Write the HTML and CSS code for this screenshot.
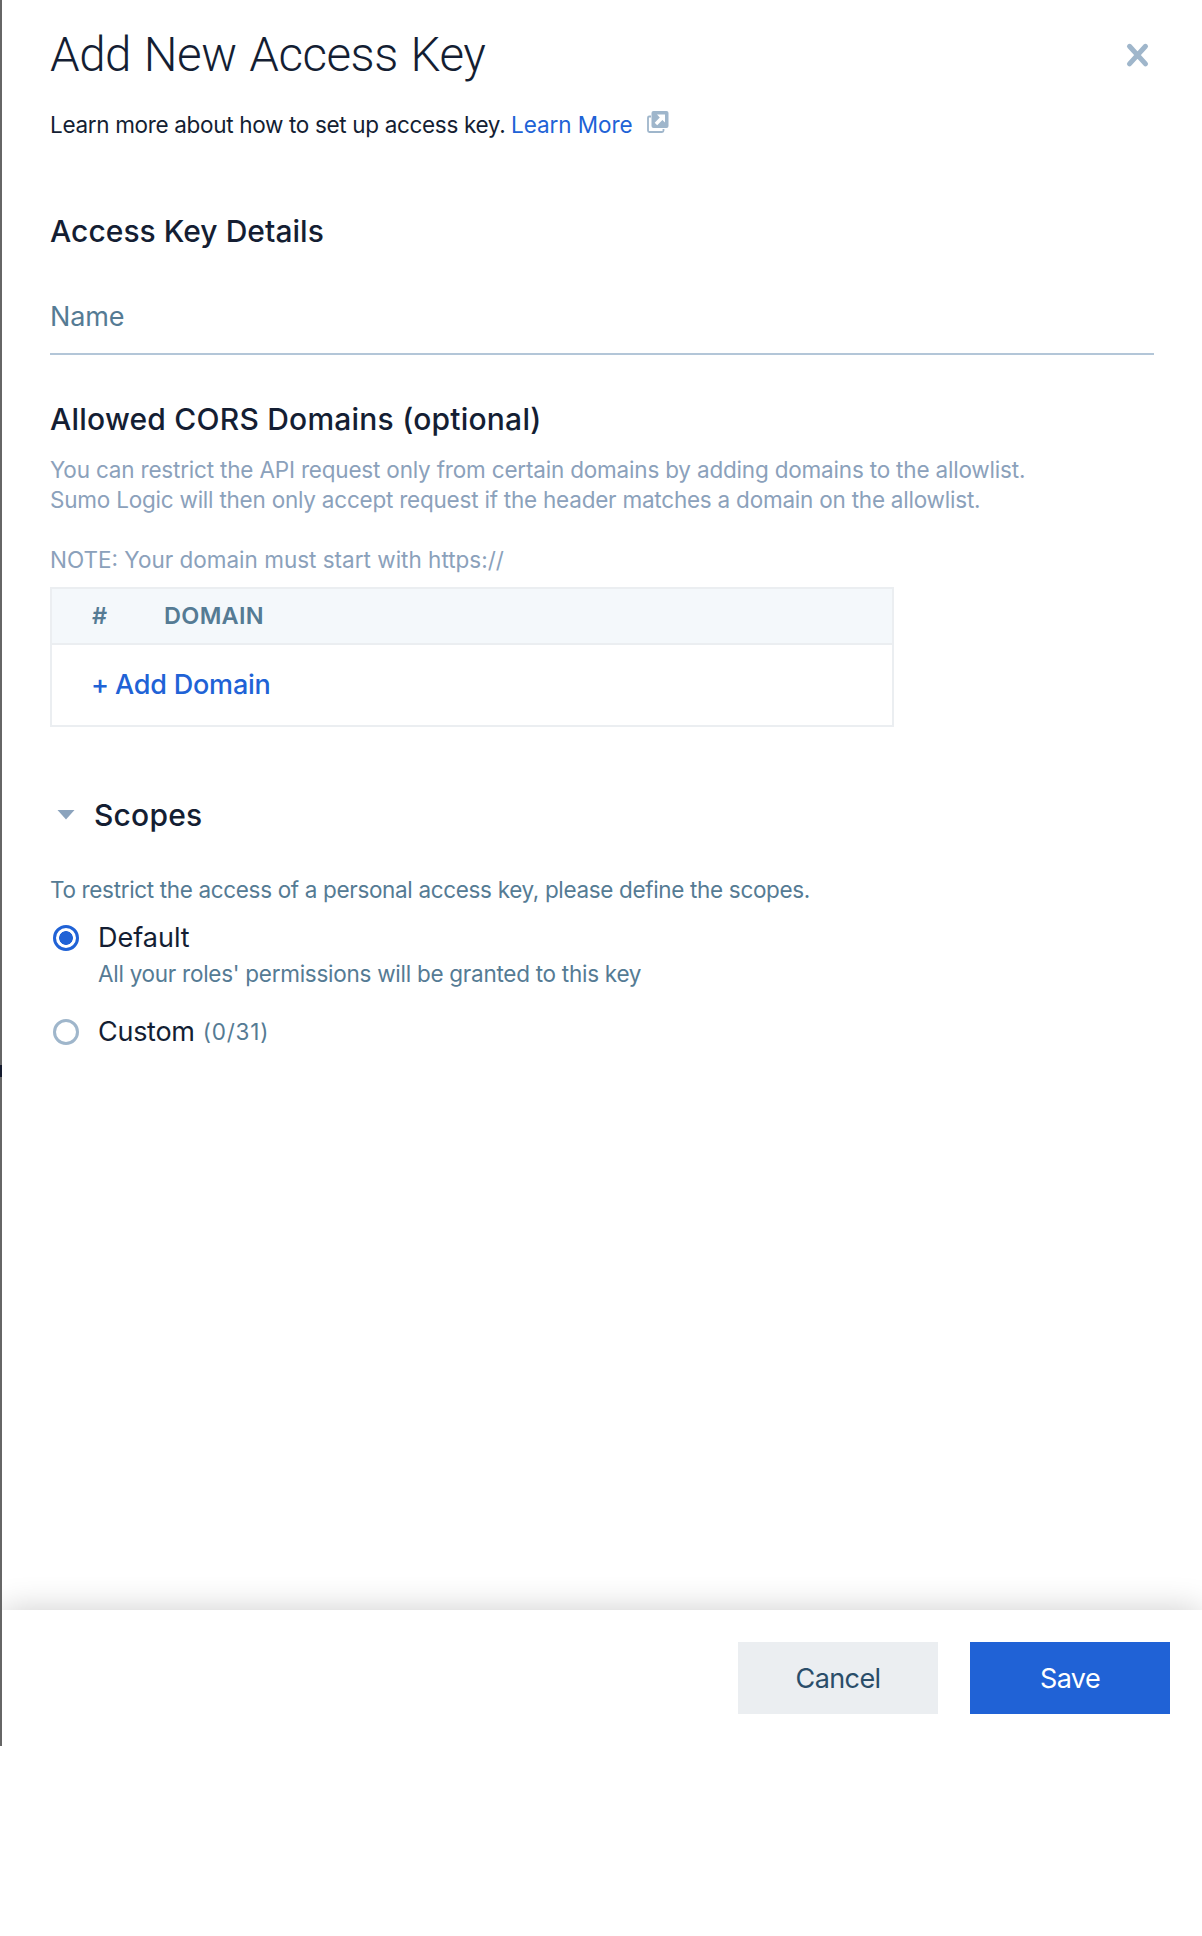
FILE: index.html
```html
<!DOCTYPE html>
<html lang="en">
<head>
<meta charset="utf-8">
<title>Add New Access Key</title>
<link rel="stylesheet" href="styles.css">
</head>
<body>
<div class="screen">
  <div class="backdrop"></div>
  <main class="panel">
    <div class="content">
      <header class="panel-header">
        <h1>Add New Access Key</h1>
        <button class="close" aria-label="Close">
          <svg width="26" height="28" viewBox="0 0 26 28"><path d="M4.5 5.3 20.5 22.9M20.5 5.3 4.5 22.9" stroke="#9fb6cb" stroke-width="5" stroke-linecap="round" fill="none"/></svg>
        </button>
      </header>
      <p class="intro"><span class="intro-text">Learn more about how to set up access key.</span><a class="link">Learn More</a><svg class="external" width="22" height="22" viewBox="0 0 22 22"><path d="M4 5.5H2.2Q1 5.5 1 6.700V19.600Q1 21 2.400 21H15Q16.500 21 16.500 19.500V18" fill="none" stroke="#9fb6cb" stroke-width="1.800"/><rect x="4.500" y="0" width="17" height="17" rx="2" fill="#9fb6cb"/><path d="M10 3.500H18V11.500L15.400 8.900 10.200 14.200 7.700 11.700 12.800 6.400Z" fill="#fff"/></svg></p>

      <h2 class="details-title">Access Key Details</h2>
      <div class="field">Name</div>

      <h2 class="cors-title">Allowed CORS Domains (optional)</h2>
      <p class="hint"><span class="hint-line">You can restrict the API request only from certain domains by adding domains to the allowlist.</span><br><span class="hint-line second">Sumo Logic will then only accept request if the header matches a domain on the allowlist.</span></p>
      <p class="hint note">NOTE: Your domain must start with https://</p>
      <div class="domains">
        <div class="domains-head"><span class="col-num">#</span><span>DOMAIN</span></div>
        <div class="domains-add"><span class="plus">+</span><span>Add Domain</span></div>
      </div>

      <div class="scopes-title">
        <svg width="18" height="10" viewBox="0 0 18 10"><path d="M.5 0H17.500L9 9.500Z" fill="#8ba3bd"/></svg>
        <h2>Scopes</h2>
      </div>
      <p class="scopes-hint">To restrict the access of a personal access key, please define the scopes.</p>
      <div class="option">
        <span class="radio selected"></span><span class="option-label">Default</span>
      </div>
      <p class="option-hint">All your roles' permissions will be granted to this key</p>
      <div class="option custom">
        <span class="radio"></span><span class="option-label">Custom</span><span class="count">(0/31)</span>
      </div>
    </div>
    <footer class="footer">
      <button class="btn cancel">Cancel</button>
      <button class="btn save">Save</button>
    </footer>
  </main>
</div>
</body>
</html>
```
FILE: styles.css
```css
* { box-sizing: border-box; }
body { margin: 0; background: #fff; color: #141e33; font-family: Inter, "Liberation Sans", sans-serif; }
h1, h2, p { margin: 0; }
button { border: 0; padding: 0; background: none; font-family: inherit; }
svg { display: block; flex: none; }

.screen { display: flex; height: 1746px; }
.backdrop {
  width: 2px;
  background: linear-gradient(#666 0 1065px, #141a2e 1065px 1077px, #666 1077px);
}
.panel { flex: 1; display: flex; flex-direction: column; overflow: hidden; background: #fff; }
.content { flex: 1; padding: 25px 48px 0; }

.panel-header { display: flex; justify-content: space-between; }
h1 { font: 300 47.5px/60px Roboto, sans-serif; letter-spacing: -0.5px; word-spacing: 1.8px; }
.close { width: 26px; height: 28px; margin: 16px 3px 0 0; }

.intro { display: flex; margin-top: 25px; font-size: 22.5px; line-height: 30px; }
.intro-text { width: 461px; letter-spacing: -0.33px; white-space: nowrap; }
.link { color: #2062d6; letter-spacing: -0.05px; }
.external { margin: 1px 0 0 14px; }

h2 { font-size: 30px; line-height: 40px; font-weight: 500; }
.details-title { margin-top: 71px; letter-spacing: 0.03px; }
.field {
  margin-top: 49px;
  padding-bottom: 19px;
  border-bottom: 2px solid #b3c6d8;
  color: #557b94;
  font-size: 27px;
  line-height: 34px;
  letter-spacing: -0.1px;
}
.cors-title { margin-top: 44px; letter-spacing: 0.22px; }
.hint { margin-top: 16px; color: #8ba1bb; font-size: 22.5px; line-height: 30px; }
.hint-line { letter-spacing: -0.19px; }
.hint-line.second { letter-spacing: -0.225px; }
.note { margin-top: 30px; }

.domains { width: 844px; height: 140px; margin-top: 12px; border: 2px solid #ebeef1; }
.domains-head {
  display: flex;
  height: 56px;
  padding-left: 40px;
  border-bottom: 2px solid #ebeef1;
  background: #f4f8fb;
  color: #557b94;
  font-size: 23.5px;
  font-weight: 600;
  line-height: 54px;
  letter-spacing: 0.3px;
}
.col-num { width: 72px; }
.domains-add {
  display: flex;
  padding-left: 39px;
  color: #2062d6;
  font-size: 27px;
  font-weight: 500;
  line-height: 80px;
  letter-spacing: -0.2px;
}
.plus { width: 24px; }

.scopes-title { display: flex; align-items: center; gap: 19px; margin-top: 68px; padding-left: 7px; }
.scopes-title h2 { letter-spacing: 0.2px; }
.scopes-hint { margin-top: 40px; color: #557b94; font-size: 22.5px; line-height: 30px; letter-spacing: -0.34px; }
.option { display: flex; align-items: center; height: 34px; margin-top: 16px; padding-left: 3px; line-height: 34px; }
.option-label { margin-left: 19px; font-size: 27px; }
.option-hint { margin: 4px 0 0 48px; color: #557b94; font-size: 22.5px; line-height: 30px; letter-spacing: -0.27px; }
.custom { margin-top: 26px; }
.custom .option-label { letter-spacing: -0.28px; }
.count { margin-left: 8px; color: #557b94; font-size: 22.5px; letter-spacing: 0.8px; }
.radio { width: 26px; height: 26px; border: 3px solid #9fb6cb; border-radius: 50%; }
.radio.selected { border-color: #2062d6; background: radial-gradient(circle, #2062d6 6.5px, #fff 7.2px); }

.footer {
  display: flex;
  justify-content: flex-end;
  gap: 32px;
  height: 136px;
  padding: 32px;
  background: #fff;
  box-shadow: 0 0 32px rgba(0, 0, 0, 0.2);
}
.btn { width: 200px; height: 72px; font-size: 27px; letter-spacing: -0.6px; }
.cancel { background: #ebeef1; color: #2a4d69; }
.save { background: #2062d6; color: #fff; }
```
